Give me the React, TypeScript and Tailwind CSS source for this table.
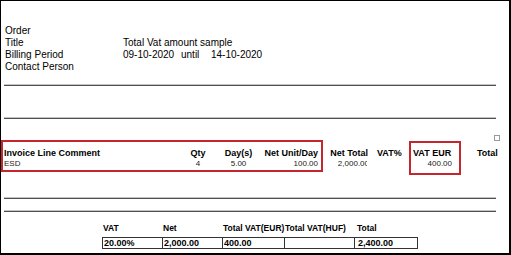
import type { ReactNode } from "react";

// Double-tone separator used between report sections
function Rule({ className = "" }: { className?: string }) {
    return (
        <div className={`ml-[3px] w-[492px] ${className}`}>
            <div className="h-[1px] bg-[#c4c4c4]" />
            <div className="h-[1px] bg-[#505050]" />
        </div>
    );
}

function InfoRow({ label, children }: { label: string; children?: ReactNode }) {
    return (
        <div className="grid grid-cols-[118px_1fr] h-[12px] whitespace-nowrap">
            <span>{label}</span>
            <span>{children}</span>
        </div>
    );
}

const summary = [
    { label: "VAT", value: "20.00%", pad: "pl-[1px]" },
    { label: "Net", value: "2,000.00", pad: "pl-[1px]" },
    { label: "Total VAT(EUR)", value: "400.00", pad: "pl-[1px]" },
    { label: "Total VAT(HUF)", value: "", pad: "pl-[0px]" },
    { label: "Total", value: "2,400.00", pad: "pl-[3px]" },
];

export default function App() {
    return (
        <div className="w-[511px] h-[255px] bg-white border-black border-t border-l border-r-2 border-b-2 overflow-hidden text-black font-['Liberation_Sans',Arial,sans-serif]">
            {/* Order header */}
            <div className="pt-[24px] pl-[4px] text-[10px] leading-[12px]">
                <InfoRow label="Order" />
                <InfoRow label="Title">Total Vat amount sample</InfoRow>
                <InfoRow label="Billing Period">
                    <span className="inline-block w-[58px]">09-10-2020</span>
                    <span className="inline-block w-[30px]">until</span>
                    <span>14-10-2020</span>
                </InfoRow>
                <InfoRow label="Contact Person" />
            </div>

            <Rule className="mt-[11px]" />
            <Rule className="mt-[31px]" />

            {/* Invoice lines */}
            <div className="relative mt-[21px] flex items-start whitespace-nowrap">
                <div className="w-[322px] h-[32px] border-2 border-[#c4262e] pt-[6px] pr-[3px] flex">
                    <div className="w-[177px] pl-[1px]">
                        <div className="text-[9px] leading-[11px] font-bold">Invoice Line Comment</div>
                        <div className="text-[8px] leading-[10px] text-[#222]">ESD</div>
                    </div>
                    <div className="w-[36px] text-center">
                        <div className="text-[9px] leading-[11px] font-bold">Qty</div>
                        <div className="text-[8px] leading-[10px] text-[#222]">4</div>
                    </div>
                    <div className="w-[45px] text-center">
                        <div className="text-[9px] leading-[11px] font-bold">Day(s)</div>
                        <div className="text-[8px] leading-[10px] text-[#222]">5.00</div>
                    </div>
                    <div className="w-[57px] text-right">
                        <div className="text-[9px] leading-[11px] font-bold">Net Unit/Day</div>
                        <div className="text-[8px] leading-[10px] text-[#222]">100.00</div>
                    </div>
                </div>
                <div className="w-[45px] pt-[8px] text-right">
                    <div className="text-[9px] leading-[11px] font-bold">Net Total</div>
                    <div className="w-[44px] overflow-hidden">
                        <div className="w-[46px] text-[8px] leading-[10px] text-[#222]">2,000.00</div>
                    </div>
                </div>
                <div className="w-[41px] pt-[8px] pl-[9px]">
                    <div className="text-[9px] leading-[11px] font-bold">VAT%</div>
                </div>
                <div className="mt-[1px] w-[52px] h-[34px] border-2 border-[#c4262e] pt-[5px]">
                    <div className="pl-[2px] text-[9px] leading-[11px] font-bold">VAT EUR</div>
                    <div className="pr-[7px] text-right text-[8px] leading-[10px] text-[#222]">400.00</div>
                </div>
                <div className="pt-[8px] pl-[16px]">
                    <div className="text-[9px] leading-[11px] font-bold">Total</div>
                </div>
                <div className="absolute left-[493px] top-[-5px] w-[6px] h-[6px] border border-[#9a9a9a]" />
            </div>

            <Rule className="mt-[22px]" />
            <Rule className="mt-[11px]" />

            {/* VAT summary */}
            <div className="ml-[101px] mt-[11px] w-[316px] whitespace-nowrap">
                <div className="grid grid-cols-[60px_60px_62px_70px_64px] text-[8.5px] leading-[10px] font-bold">
                    {summary.map((s) => (
                        <div key={s.label} className={s.label === "Total" ? "pl-[3px]" : "pl-[1px]"}>
                            {s.label}
                        </div>
                    ))}
                </div>
                <div className="mt-[4px] grid grid-cols-[60px_60px_62px_70px_64px] h-[12px] border-r border-[#333] text-[9px] leading-[10px] font-bold">
                    {summary.map((s) => (
                        <div key={s.label} className={`border-l border-y border-[#333] ${s.pad}`}>
                            {s.value}
                        </div>
                    ))}
                </div>
            </div>
        </div>
    );
}
